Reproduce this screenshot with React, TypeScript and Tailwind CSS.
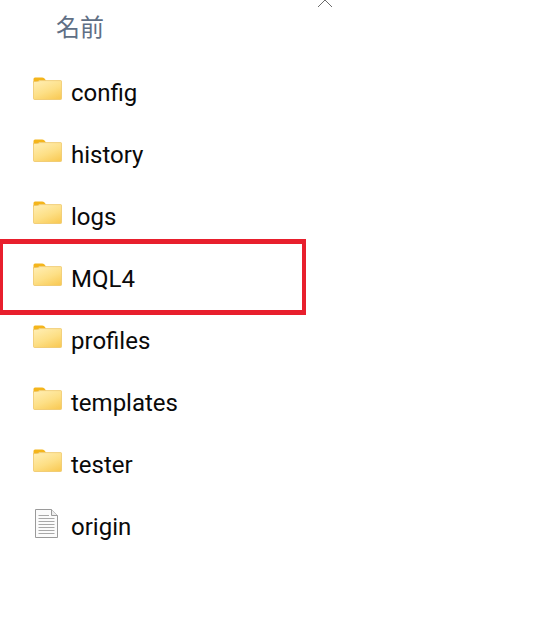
const folders = ["config", "history", "logs", "MQL4", "profiles", "templates", "tester"];

const FolderIcon = () => (
  <svg width="29" height="23" viewBox="0 0 29 23" className="shrink-0">
    <defs>
      <linearGradient id="folderBody" x1="0.2" y1="0" x2="0.8" y2="1">
        <stop offset="0" stopColor="#ffedb0" />
        <stop offset="0.55" stopColor="#fddf85" />
        <stop offset="1" stopColor="#f9cb58" />
      </linearGradient>
    </defs>
    <path d="M0.5 2 Q0.5 0.5 2 0.5 H9 Q10.5 0.5 11.5 1.5 L13 3.5 H6.5 L0.5 6 Z" fill="#f4b51c" />
    <path d="M0.5 4.5 H5 L7 3.6 H27.7 Q28.6 3.6 28.6 4.6 V21.5 Q28.6 22.5 27.6 22.5 H1.5 Q0.5 22.5 0.5 21.5 Z" fill="url(#folderBody)" stroke="#ecc25c" strokeWidth="0.7" />
  </svg>
);

const FileIcon = () => (
  <svg width="23" height="29" viewBox="0 0 23 29" className="shrink-0">
    <path d="M0.5 0.5 H16.5 L22.5 6.5 V28.5 H0.5 Z" fill="#fbfbfb" stroke="#9a9a9a" />
    <path d="M16.5 0.5 V6.5 H22.5" fill="#ececec" stroke="#9a9a9a" />
    <path d="M3.5 6.5 H14 M3.5 9.5 H19.5 M3.5 12.5 H19.5 M3.5 15.5 H19.5 M3.5 18.5 H19.5 M3.5 21.5 H19.5 M3.5 24.5 H19.5" stroke="#a8a8a8" />
  </svg>
);

const Row = ({ name, file }: { name: string; file?: boolean }) => (
  <div className="flex h-[62px] items-center">
    <div className="flex w-[71px] justify-start pb-[8px] pl-[33px]">
      {file ? <div className="ml-[2px] mt-[2px]"><FileIcon /></div> : <FolderIcon />}
    </div>
    <span className="pt-[2px] text-[24px] leading-none text-[#0a0a0a]">{name}</span>
  </div>
);

export default function App() {
  return (
    <div className="relative h-[638px] w-[552px] overflow-hidden bg-white font-['Roboto','Noto_Sans_CJK_SC',sans-serif]">
      {/* sort caret */}
      <svg width="16" height="8" viewBox="0 0 16 8" className="absolute left-[317px] top-0">
        <path d="M1 7 L8 0 L15 7" fill="none" stroke="#6b6b6b" strokeWidth="1" />
      </svg>

      <div className="flex h-[61px] items-center pb-[9px] pl-[56px]">
        <span className="font-['Noto_Sans_CJK_JP','Noto_Sans',sans-serif] text-[24px] leading-none text-[#5f6f85]">名前</span>
      </div>

      <div className="flex flex-col">
        {folders.map((f) => (
          <Row key={f} name={f} />
        ))}
        <Row name="origin" file />
      </div>

      {/* red highlight on MQL4 */}
      <div className="absolute left-0 top-[239px] h-[76px] w-[306px] border-y-[5px] border-r-[4px] border-l-[3px] border-[#e81f2d]" />
    </div>
  );
}
